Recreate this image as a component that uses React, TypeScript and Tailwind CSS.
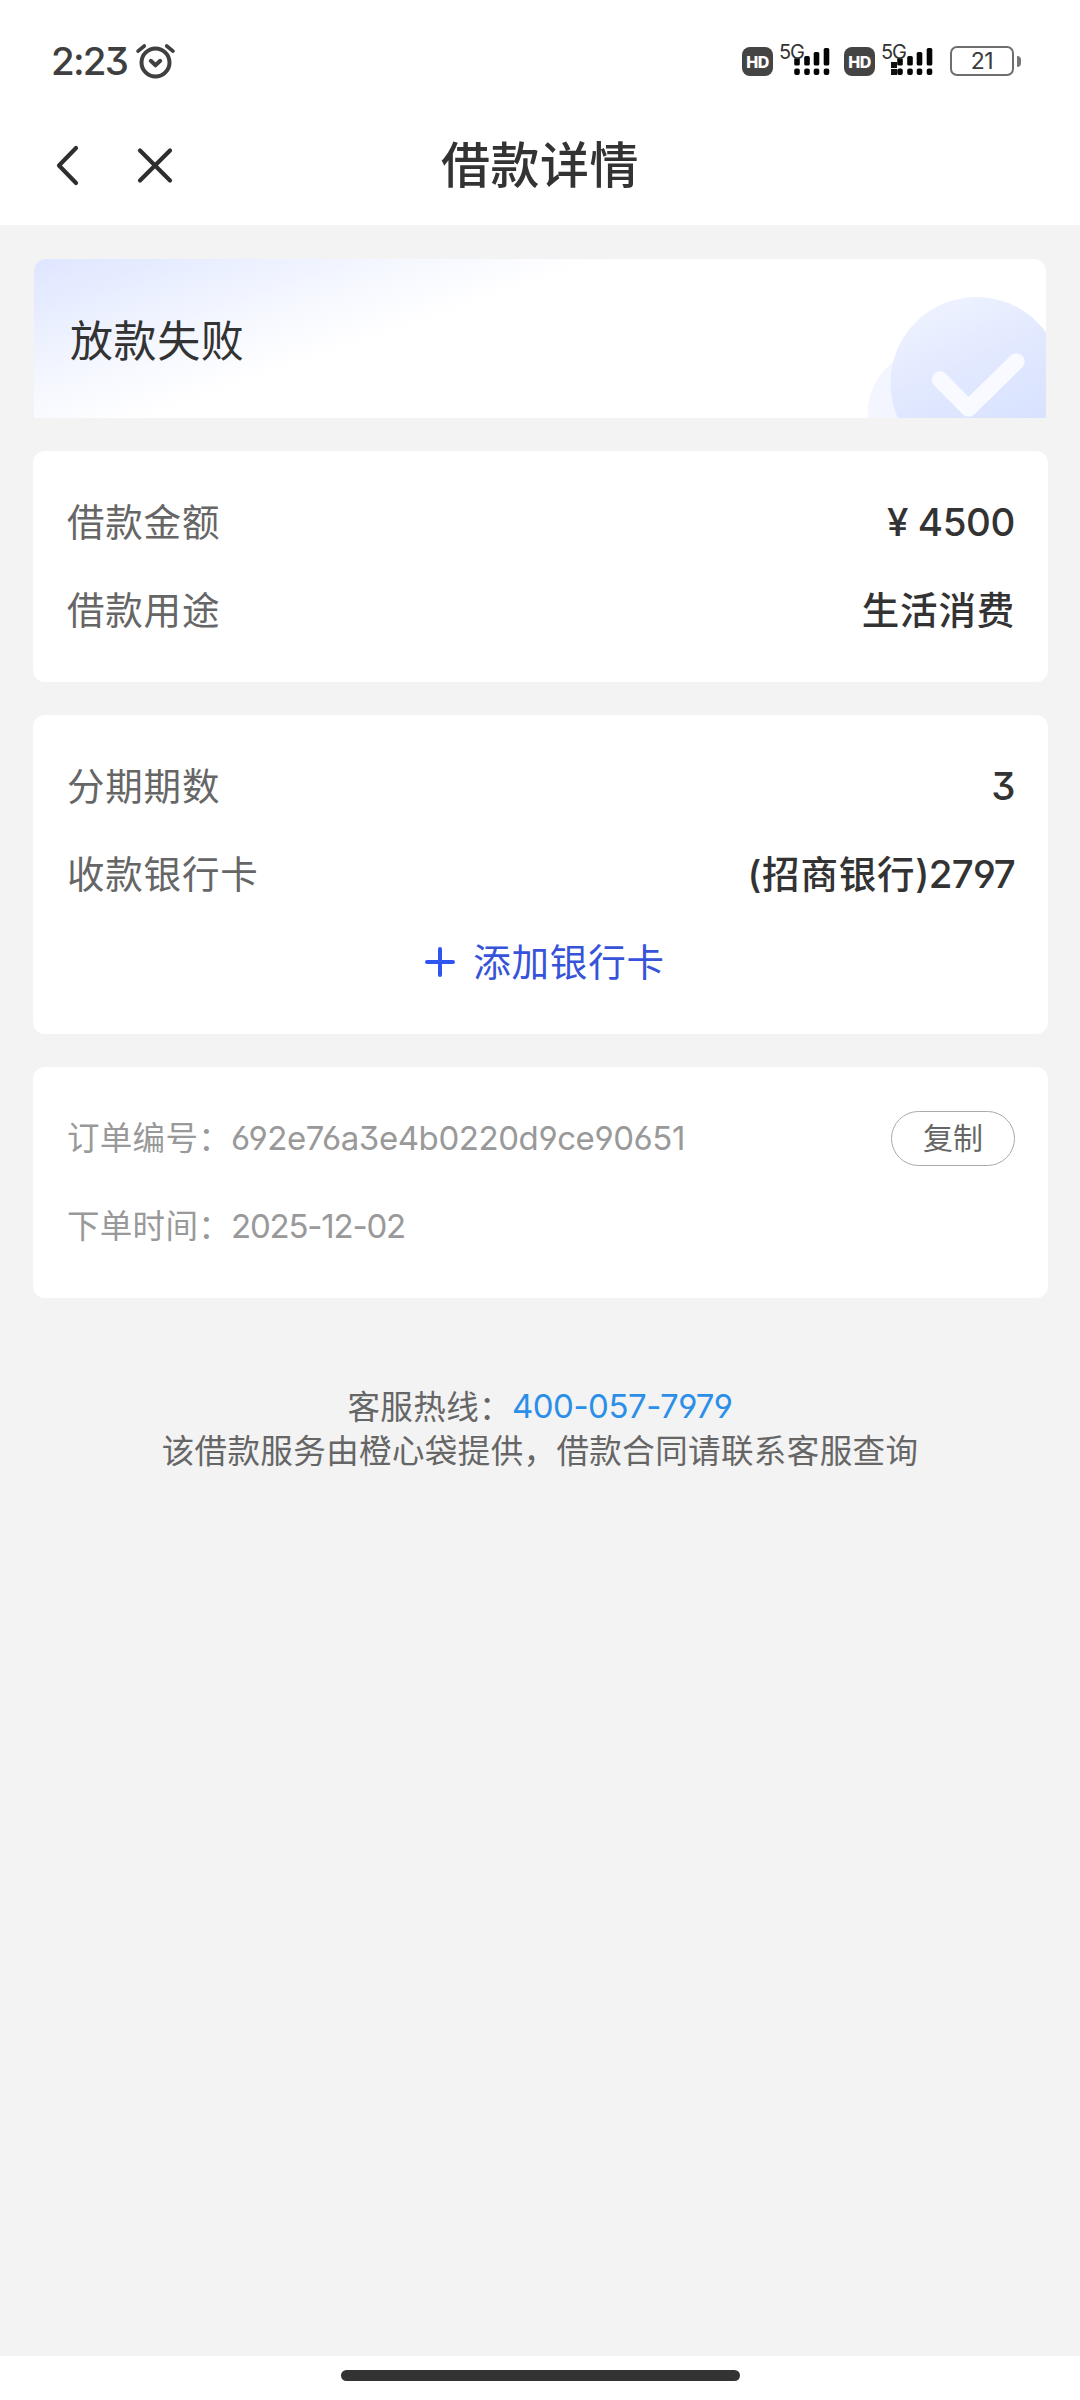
import type { ReactNode } from "react";

const num = "font-['Inter'] [font-feature-settings:'cv03','cv04','cv09']";

function HdBadge() {
  return (
    <div className="flex h-[29px] w-[31px] items-center justify-center rounded-lg bg-[#444] font-['Inter'] text-[16px] font-extrabold tracking-[-0.4px] text-white">
      HD
    </div>
  );
}

function Signal({ extra = false }: { extra?: boolean }) {
  // each bar: x, top of the upper part
  const bars = [
    [17, 15],
    [27, 13],
    [36.5, 9],
    [46.5, 5],
  ];
  const shift = extra ? 1 : 0;
  return (
    <svg width="54" height="36" viewBox="0 0 54 36" className="shrink-0 overflow-visible">
      {extra && (
        <>
          <rect x="9" y="19" width="6" height="6" fill="#111" />
          <rect x="9" y="26" width="6" height="6" fill="#111" />
        </>
      )}
      {bars.map(([x, y]) => (
        <g key={x} fill="#050505">
          <rect x={x - 2.8 + shift} y={y} width="5.6" height={22.5 - y} rx="1.6" />
          <rect x={x - 2.8 + shift} y="25.5" width="5.6" height="6.5" rx="2" />
        </g>
      ))}
      <text x="-1" y="16" fontFamily="Inter" fontSize="20" fill="#333" textLength="26">
        5G
      </text>
    </svg>
  );
}

function StatusBar() {
  return (
    <div className="flex h-[105px] items-start pt-[43px] pl-[51px]">
      <div className={`h-9 w-[83px] text-[38.5px] leading-9 font-medium tracking-[-1.8px] text-[#3f3f3f] ${num}`}>
        2:23
      </div>
      <svg width="42" height="38" viewBox="0 0 42 38" fill="none" stroke="#404040" strokeWidth="4" strokeLinecap="round" strokeLinejoin="round">
        <circle cx="21.5" cy="19.5" r="14" />
        <path d="M16.8 17.8l4.7 4.5 4.7-4.5" />
        <path d="M4 8.2l6.3-5.2M39 8.2L32.7 3" strokeWidth="3.6" />
      </svg>
      <div className="ml-auto flex w-[338px] shrink-0 items-start">
        <div className="mt-1">
          <HdBadge />
        </div>
        <div className="ml-[7px]">
          <Signal />
        </div>
        <div className="mt-1 ml-[10px]">
          <HdBadge />
        </div>
        <div className="ml-[7px]">
          <Signal extra />
        </div>
        <div className="mt-[3px] ml-[14px] flex shrink-0 items-center gap-[3px]">
          <div className="flex h-[30px] w-[64px] items-center justify-center rounded-[7px] border-2 border-[#6e6e6e] font-['Inter'] text-[23px] tracking-[-0.5px] text-[#3a3a3a]">
            21
          </div>
          <div className="h-[11px] w-1 rounded-r-full bg-[#777]" />
        </div>
      </div>
    </div>
  );
}

function NavBar() {
  return (
    <div className="grid h-[120px] grid-cols-[1fr_auto_1fr] items-center">
      <svg width="140" height="44" viewBox="0 0 140 44" className="ml-[50px]" fill="none" stroke="#2e2e2e" strokeWidth="4.2" strokeLinecap="round" strokeLinejoin="round">
        <path d="M26 5L9 22.5l17 17.5" />
        <path d="M90 7.5l30 30M120 7.5l-30 30" />
      </svg>
      <h1 className="pb-[7px] text-[49px] leading-[60px] font-medium tracking-[0.5px] text-[#333]">借款详情</h1>
    </div>
  );
}

function Banner() {
  return (
    <div className="relative mx-[34px] flex h-[159px] items-center overflow-hidden rounded-t-xl bg-[linear-gradient(161deg,#dfe5ff_0%,#e9efff_13%,#f5f7ff_25%,#fff_39%)] px-[36px]">
      <span className="pb-[1px] text-[43px] leading-[60px] tracking-[0.6px] text-[#333]">放款失败</span>
      <svg width="180" height="126" viewBox="0 0 180 126" className="absolute right-0 bottom-0">
        <defs>
          <linearGradient id="disc" x1="0.25" y1="0" x2="0.6" y2="0.8">
            <stop offset="0" stopColor="#eff3ff" />
            <stop offset="0.5" stopColor="#e2e9ff" />
            <stop offset="1" stopColor="#d9e2ff" />
          </linearGradient>
        </defs>
        <circle cx="64" cy="120" r="62" fill="#f3f5ff" />
        <circle cx="110.5" cy="91" r="86" fill="url(#disc)" />
        <path d="M74 87.5L102.5 116.5 150.5 69.5" fill="none" stroke="#f8faff" strokeWidth="16.5" strokeLinecap="round" strokeLinejoin="round" />
      </svg>
    </div>
  );
}

function Card({ children }: { children: ReactNode }) {
  return <div className="mr-8 ml-[33px] rounded-xl bg-white pt-[27px] pr-[33px] pb-7 pl-[34px]">{children}</div>;
}

function Row({ label, children }: { label: string; children: ReactNode }) {
  return (
    <div className="flex h-[88px] items-start justify-between text-[37.5px] leading-[84px] tracking-[0.8px]">
      <span className="text-[#666]">{label}</span>
      <span className="font-medium text-[#333]">{children}</span>
    </div>
  );
}

export default function App() {
  return (
    <div className="flex h-[2400px] w-[1080px] flex-col bg-[#f3f3f3] font-['Noto_Sans_CJK_SC',sans-serif] whitespace-nowrap">
      <header className="h-[225px] bg-white">
        <StatusBar />
        <NavBar />
      </header>

      <main className="flex flex-1 flex-col gap-[33px] pt-[34px]">
        <Banner />

        <Card>
          <Row label="借款金额">
            <span className={`text-[38.5px] tracking-[-0.4px] ${num}`}>¥ 4500</span>
          </Row>
          <Row label="借款用途">生活消费</Row>
        </Card>

        <Card>
          <Row label="分期期数">
            <span className={`text-[38.5px] tracking-[-0.4px] ${num}`}>3</span>
          </Row>
          <Row label="收款银行卡">
            <span className={num}>(</span>招商银行
            <span className={`text-[38.5px] tracking-[-0.7px] ${num}`}>)2797</span>
          </Row>
          <div className="flex h-[88px] items-center justify-center gap-[18px] pl-2 text-[37.5px] leading-[84px] tracking-[0.8px] text-[#3653d9]">
            <svg width="30" height="30" viewBox="0 0 30 30" stroke="#2f55f0" strokeWidth="4" strokeLinecap="round">
              <path d="M15 2v26M2 15h26" />
            </svg>
            <span className="pb-[5px]">添加银行卡</span>
          </div>
        </Card>

        <Card>
          <div className="flex h-[88px] items-center text-[32.5px] leading-[84px] text-[#999]">
            <span className="pb-[5px] tracking-[0.3px]">订单编号：</span>
            <span className={`text-[33px] tracking-[-0.42px] ${num}`}>692e76a3e4b0220d9ce90651</span>
            <button className="ml-auto flex h-[55px] w-[124px] items-center justify-center rounded-full border border-[#aaa] pb-[4px] text-[30px] leading-none text-[#666]">
              复制
            </button>
          </div>
          <div className="flex h-[88px] items-center text-[32.5px] leading-[84px] text-[#999]">
            <span className="pb-[5px] tracking-[0.3px]">下单时间：</span>
            <span className={`text-[33px] tracking-[-1.2px] ${num}`}>2025-12-02</span>
          </div>
        </Card>

        <footer className="mt-[52px] flex flex-col items-center text-[32.5px] leading-[43px] tracking-[0.4px] text-[#666]">
          <p className="flex h-[44px]">
            <span>客服热线：</span>
            <span className={`pt-[2px] text-[33px] tracking-[-0.5px] text-[#2b8fe8] ${num}`}>400-057-7979</span>
          </p>
          <p className="h-[43px]">该借款服务由橙心袋提供，借款合同请联系客服查询</p>
        </footer>
      </main>

      <div className="flex h-11 justify-center bg-white pt-[14px]">
        <div className="h-[11px] w-[399px] rounded-full bg-[#333]" />
      </div>
    </div>
  );
}
